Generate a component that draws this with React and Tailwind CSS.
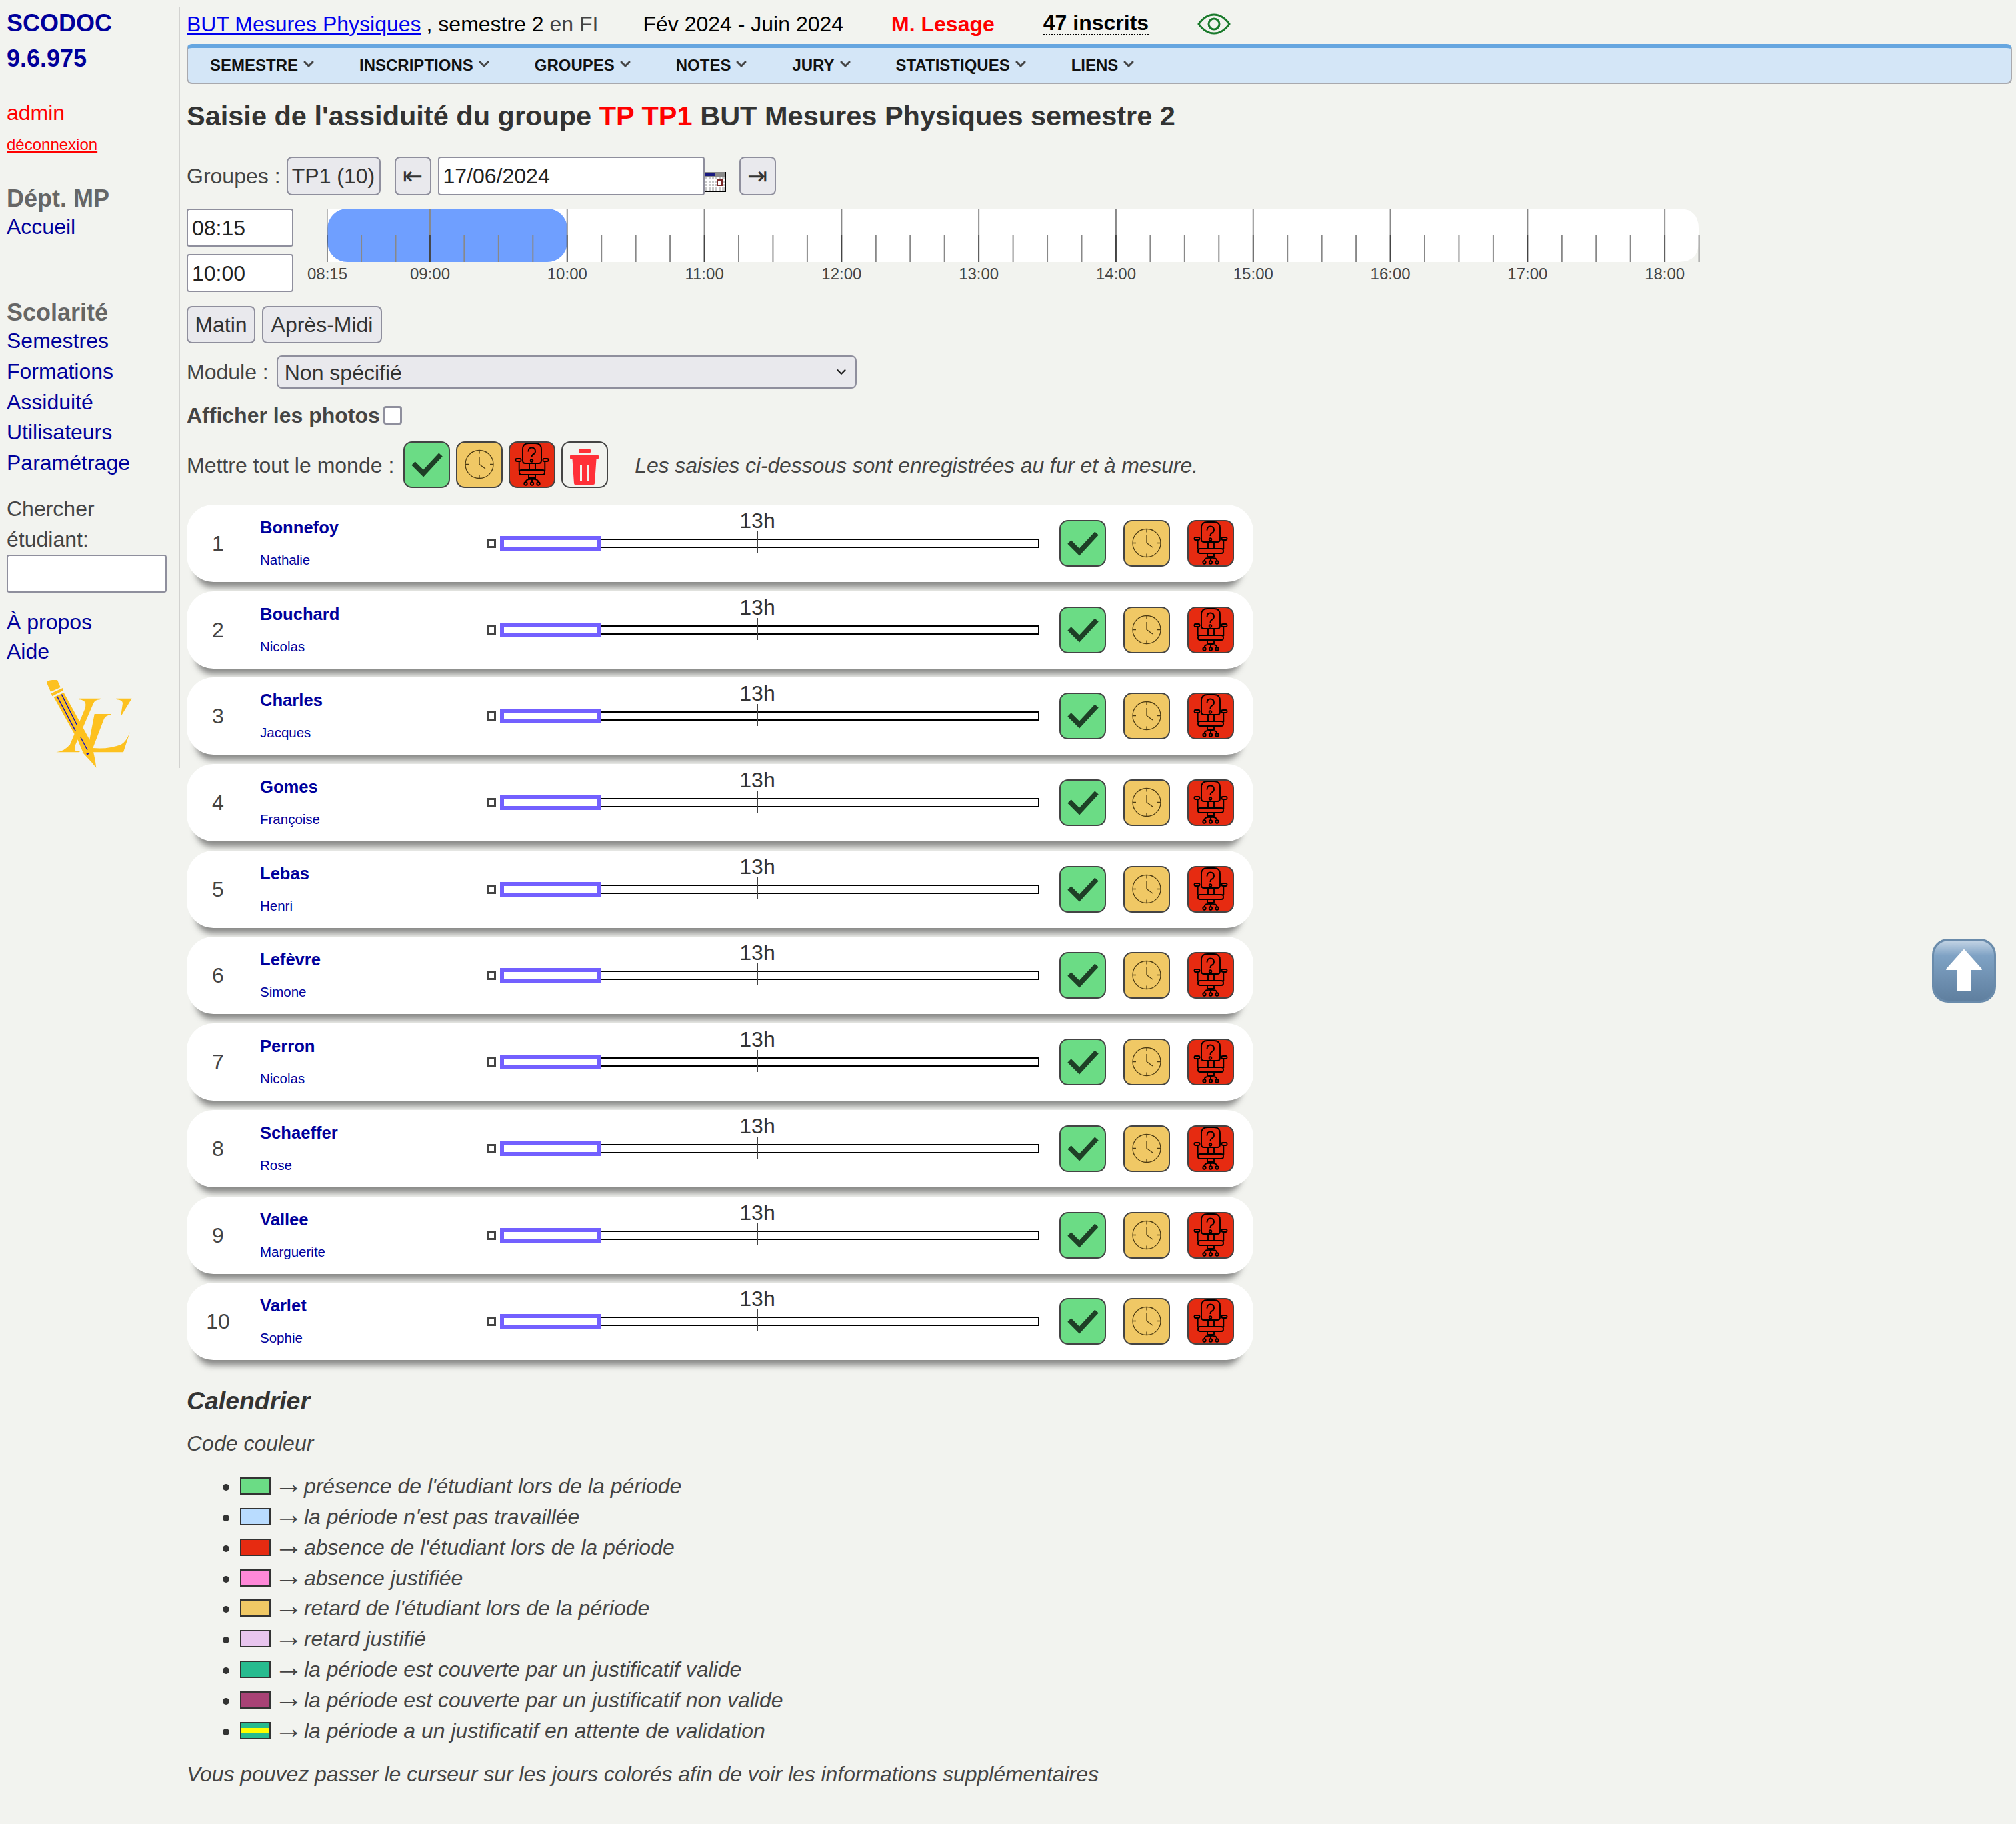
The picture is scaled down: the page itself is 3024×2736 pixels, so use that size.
import React from 'react'
import { ChevronDown } from 'lucide-react'

const students = [
  ['Bonnefoy', 'Nathalie'],
  ['Bouchard', 'Nicolas'],
  ['Charles', 'Jacques'],
  ['Gomes', 'Françoise'],
  ['Lebas', 'Henri'],
  ['Lefèvre', 'Simone'],
  ['Perron', 'Nicolas'],
  ['Schaeffer', 'Rose'],
  ['Vallee', 'Marguerite'],
  ['Varlet', 'Sophie'],
]

const menu = ['Semestre', 'Inscriptions', 'Groupes', 'Notes', 'Jury', 'Statistiques', 'Liens']
const scolarite = ['Semestres', 'Formations', 'Assiduité', 'Utilisateurs', 'Paramétrage']
const hours = ['09:00', '10:00', '11:00', '12:00', '13:00', '14:00', '15:00', '16:00', '17:00', '18:00']

const legend = [
  ['bg-[#6bdc85]', "présence de l'étudiant lors de la période"],
  ['bg-[#b9dcff]', "la période n'est pas travaillée"],
  ['bg-[#e62b11]', "absence de l'étudiant lors de la période"],
  ['bg-[#ff88d8]', 'absence justifiée'],
  ['bg-[#f0c865]', "retard de l'étudiant lors de la période"],
  ['bg-[#e8c5ee]', 'retard justifié'],
  ['bg-[#27bb8f]', 'la période est couverte par un justificatif valide'],
  ['bg-[#a84275]', 'la période est couverte par un justificatif non valide'],
  ['bg-[linear-gradient(#27bb8f_33%,#ffff00_33%,#ffff00_66%,#27bb8f_66%)]', 'la période a un justificatif en attente de validation'],
]

const CheckIcon = () => (
  <svg viewBox="2 2 66 66" className="h-[66px] w-[66px]">
    <path d="M15 33 L30 48 L56 20" fill="none" stroke="#1e3f26" strokeWidth="7.5" />
  </svg>
)

const ClockIcon = () => (
  <svg viewBox="2 2 66 66" className="h-[66px] w-[66px]" fill="none" stroke="#4d3c14" strokeWidth="1.3">
    <circle cx="35" cy="34.5" r="21" />
    <path d="M35 13.5v5M35 50.5v5M14 34.5h5M51 34.5h5M35 23v11.5L44 41" />
  </svg>
)

const ChairIcon = () => (
  <svg viewBox="2 2 66 66" className="h-[66px] w-[66px]" fill="none" stroke="#000" strokeWidth="1.9">
    <path d="M21 12 Q21 3 30 3 H40 Q49 3 49 12 V29 Q49 33 45 33 H25 Q21 33 21 29Z" />
    <path d="M29.5 15.5 Q29.5 9.5 34.5 9.5 Q40 9.5 40 15 Q40 18 36 20 Q34.5 21 34.5 24" strokeWidth="2" />
    <circle cx="34.5" cy="29" r="1.8" />
    <rect x="10.5" y="26" width="8" height="4" rx="1.5" />
    <rect x="51.5" y="26" width="8" height="4" rx="1.5" />
    <path d="M15.7 30 V44 M54.3 30 V44 M31 33 V43 M40 33 V43" />
    <rect x="16" y="43" width="38" height="7" rx="3" />
    <path d="M30 50 V55 H40 V50 M35 55 V61 M35 57 Q26 56 25.5 61 M35 57 Q44 56 44.5 61" />
    <circle cx="25.5" cy="63.5" r="2.2" />
    <circle cx="35" cy="63.5" r="2.2" />
    <circle cx="44.5" cy="63.5" r="2.2" />
  </svg>
)

const TrashIcon = () => (
  <svg viewBox="2 2 66 66" className="h-[66px] w-[66px]" fill="#ff3038">
    <rect x="26" y="12" width="18" height="5" rx="1" />
    <rect x="13" y="20" width="43" height="7" rx="2" />
    <path fillRule="evenodd" d="M16.5 27 H52.5 L50 63 Q50 65 48 65 H21 Q19 65 19 63Z M28 35 V59 H31 V35Z M39 35 V59 H42 V35Z" />
  </svg>
)

const EtatButton = ({ color, children }) => (
  <button className={`flex h-[70px] w-[70px] items-center justify-center overflow-hidden rounded-[13px] border-2 border-[#444] ${color}`}>
    {children}
  </button>
)

const Logo = () => (
  <svg viewBox="0 0 510 510" className="ml-[40px] mt-[1px] h-[170px] w-[170px]" fill="#fdc11f">
    <path d="M60 72 Q62 62 85 60 L108 60 L122 93 L78 113 Z" />
    <path d="M80 120 L132 96 L135 107 L85 133 Z" />
    <path d="M205 143 H303 L300 148 Q275 148 268 170 L190 350 Q185 372 190 378 L215 378 L205 385 H103 Q140 380 165 350 L232 190 Q245 150 205 148Z" />
    <path d="M275 213 H350 L347 218 Q325 218 318 235 L268 366 Q340 372 395 350 Q420 335 435 293 L405 385 H220 L245 370 Z" />
    <path d="M372 143 H443 L393 225 L402 165 Q402 150 375 148Z" />
    <path d="M92 137 L137 117 L262 345 L278 420 L283 455 L262 430 L225 390 L200 330 Z" />
    <path d="M107 134 L190 290 M127 125 L197 264 M213 318 L243 375" stroke="#0a0ac8" strokeWidth="4" />
    <path d="M238 388 L252 390 L241 400Z" fill="#0a0ac8" />
  </svg>
)

const Sidebar = () => (
  <aside className="mt-[10px] h-[1142px] w-[270px] shrink-0 border-r-2 border-[#d2d2d0] pl-[10px] text-[#00009b]">
    <div className="pt-[1px] text-[36px] font-bold leading-[48px]">SCODOC</div>
    <div className="mt-[5px] text-[36px] font-bold leading-[48px]">9.6.975</div>
    <div className="mt-[34px] leading-[46px] text-[#ff0000]">admin</div>
    <a className="mt-[8px] block text-[24px] leading-[34px] text-[#ff0000] underline">déconnexion</a>
    <div className="mt-[43px] text-[36px] font-bold leading-[42px] text-[#666]">Dépt. MP</div>
    <a className="block leading-[42px]">Accueil</a>
    <div className="mt-[88px] text-[36px] font-bold leading-[40px] text-[#666]">Scolarité</div>
    {scolarite.map(item => (
      <a key={item} className="block leading-[45.8px]">{item}</a>
    ))}
    <div className="mt-[22px] leading-[46px] text-[#444]">Chercher</div>
    <div className="leading-[46px] text-[#444]">étudiant:</div>
    <input className="block h-[57px] w-[240px] rounded-[4px] border-2 border-[#8f8f9d] bg-white" />
    <a className="mt-[22px] block leading-[44px]">À propos</a>
    <a className="block leading-[44px]">Aide</a>
    <Logo />
  </aside>
)

const TopBar = () => (
  <div className="flex h-[66px] items-center pt-[5px] text-black">
    <a className="text-[#0000ee] underline">BUT Mesures Physiques</a>
    <span className="ml-[8px]">, semestre 2 <span className="text-[#444]">en FI</span></span>
    <span className="ml-[67px]">Fév 2024 - Juin 2024</span>
    <span className="ml-[72px] font-bold text-[#ff0000]">M. Lesage</span>
    <span className="ml-[73px] border-b-2 border-dotted border-black font-bold leading-[33px]">47 inscrits</span>
    <svg viewBox="0 0 50 32" className="ml-[73px] h-[32px] w-[50px]" fill="none" stroke="#1a7a2c" strokeWidth="3">
      <path d="M2 16 Q12 2 25 2 Q38 2 48 16 Q38 30 25 30 Q12 30 2 16Z" />
      <circle cx="25" cy="16" r="8" />
    </svg>
  </div>
)

const MenuBar = () => (
  <nav className="flex h-[60px] w-[2738px] items-center gap-[64px] rounded-[8px] border-2 border-t-[6px] border-[#a9a9ae] border-t-[#66a6e0] bg-[#d4e6f7] pl-[33px] text-[24px] font-bold uppercase text-[#111]">
    {menu.map(item => (
      <span key={item} className="flex items-center gap-[4px]">
        {item}
        <ChevronDown size={24} strokeWidth={3} className="-mt-[4px] text-[#444]" />
      </span>
    ))}
  </nav>
)

const Timeline = () => {
  const ticks = Array.from({ length: 41 }, (_, i) => 0.6 + i * 51.45)
  return (
    <div className="relative ml-[50px] h-[125px] w-[2060px]">
      <svg viewBox="0 0 2060 80" className="h-[80px] w-[2060px]">
        <path d="M0 0 H2028 Q2058 0 2058 30 V50 Q2058 80 2028 80 H0Z" fill="#fff" />
        <rect x="1" y="0" width="360" height="80" rx="30" fill="#6f9fff" />
        {ticks.map((x, i) => {
          const major = i % 4 === 3 || i === 0
          return (
            <g key={i} strokeWidth="2">
              {major && <line x1={x} x2={x} y1="0" y2="40" stroke="#888" />}
              <line x1={x} x2={x} y1="40" y2="80" stroke={major ? '#444' : '#888'} />
            </g>
          )
        })}
      </svg>
      <span className="absolute left-[1px] top-[84px] -translate-x-1/2 text-[24px] leading-[28px] text-[#444]">08:15</span>
      {hours.map((h, i) => (
        <span
          key={h}
          className="absolute top-[84px] -translate-x-1/2 text-[24px] leading-[28px] text-[#444]"
          style={{ left: 155 + i * 205.8 }}
        >
          {h}
        </span>
      ))}
    </div>
  )
}

const MiniTimeline = () => (
  <div className="relative h-full w-[859px] shrink-0">
    <div className="absolute left-0 top-[51px] h-[14px] w-[14px] border-[3px] border-[#444] bg-white" />
    <div className="absolute left-[20px] top-[51px] h-[14px] w-[809px] border-2 border-black bg-white" />
    <div className="absolute left-[20px] top-[47px] h-[22px] w-[152px] border-[6px] border-[#7360ff] bg-white" />
    <div className="absolute left-[405px] top-[40px] h-[33px] w-[2px] bg-[#444]" />
    <span className="absolute left-[406px] top-[5px] -translate-x-1/2 leading-[38px] text-[#333]">13h</span>
  </div>
)

const StudentCard = ({ index, last, first }) => (
  <div className="flex h-[116px] w-[1600px] items-center rounded-[40px] bg-white shadow-[-2px_24px_10px_-16px_rgba(68,68,68,0.61)]">
    <div className="w-[94px] shrink-0 text-center text-[#444]">{index}</div>
    <div className="h-full w-[356px] shrink-0 pl-[16px] text-[#00009b]">
      <div className="pt-[18px] text-[25.6px] font-bold leading-[32px]">{last}</div>
      <div className="mt-[20px] text-[20.5px] leading-[26px]">{first}</div>
    </div>
    <MiniTimeline />
    <div className="flex gap-[26px] pl-0">
      <EtatButton color="bg-[#6bdc85]"><CheckIcon /></EtatButton>
      <EtatButton color="bg-[#f0c865]"><ClockIcon /></EtatButton>
      <EtatButton color="bg-[#e62b11]"><ChairIcon /></EtatButton>
    </div>
  </div>
)

const Legend = () => (
  <div className="text-[#444] italic">
    <h3 className="mt-[38px] text-[37.4px] font-bold leading-[46px] text-[#333]">Calendrier</h3>
    <p className="mt-[18px] leading-[46px]">Code couleur</p>
    <ul className="mt-[19px] list-disc pl-[80px] marker:text-[#333]">
      {legend.map(([color, label]) => (
        <li key={label} className="leading-[45.8px]">
          <span className={`mr-[5px] inline-block h-[26px] w-[46px] border-2 border-[#333] align-[-2px] ${color}`} />
          <span className="inline-block w-[36px] text-[44px] leading-[0] not-italic">→</span> {label}
        </li>
      ))}
    </ul>
    <p className="mt-[19px] leading-[46px] tracking-[-0.06px]">Vous pouvez passer le curseur sur les jours colorés afin de voir les informations supplémentaires</p>
  </div>
)

const btn = 'rounded-[8px] border-2 border-[#8f8f9d] bg-[#e9e9ed] text-[#333]'

const App = () => (
  <div className="relative flex min-h-[2736px] bg-[#f2f3ef] font-['Liberation_Sans',Arial,sans-serif] text-[32px] text-[#444]">
    <Sidebar />
    <main className="pl-[10px]">
      <TopBar />
      <MenuBar />
      <h2 className="mt-[22px] text-[41.5px] font-bold leading-[52px] text-[#333]">
        Saisie de l'assiduité du groupe <span className="text-[#ff0000]">TP TP1</span> BUT Mesures Physiques semestre 2
      </h2>

      <div className="mt-[35px] flex h-[58px] items-center">
        <span>Groupes :</span>
        <button className={`ml-[9px] h-[58px] w-[141px] ${btn}`}>TP1 (10)</button>
        <button className={`ml-[21px] h-[58px] w-[55px] ${btn} text-[36px] leading-none`}>⇤</button>
        <input defaultValue="17/06/2024" className="ml-[10px] h-[58px] w-[400px] rounded-[4px] border-2 border-[#8f8f9d] bg-white px-[6px] pt-[1px] text-[#222]" />
        <svg viewBox="0 0 32 30" className="mt-[18px] h-[30px] w-[32px]">
          <rect width="32" height="30" fill="#8a8a8a" />
          <rect x="1" y="2" width="15" height="4" fill="#1a1a80" />
          <rect x="0" y="7" width="30" height="21" fill="#c8c8c8" />
          <path d="M0 12h30M0 17h30M0 22h30M5 7v21M10 7v21M15 7v21M20 7v21M25 7v21" stroke="#fff" strokeWidth="2" />
          <rect x="19" y="12" width="7" height="8" fill="#fff" stroke="#7a2a2a" strokeWidth="2" />
          <path d="M31 0v30M0 29h32" stroke="#000" strokeWidth="2" />
        </svg>
        <button className={`ml-[20px] h-[58px] w-[55px] ${btn} text-[36px] leading-none`}>⇥</button>
      </div>

      <div className="mt-[20px] flex">
        <div className="flex w-[160px] flex-col gap-[11px]">
          <input defaultValue="08:15" className="h-[57px] w-[160px] rounded-[4px] border-2 border-[#8f8f9d] bg-white px-[6px] pt-[1px] text-[#222]" />
          <input defaultValue="10:00" className="h-[57px] w-[160px] rounded-[4px] border-2 border-[#8f8f9d] bg-white px-[6px] pt-[1px] text-[#222]" />
        </div>
        <Timeline />
      </div>

      <div className="mt-[21px] flex gap-[10px]">
        <button className={`h-[56px] w-[103px] ${btn}`}>Matin</button>
        <button className={`h-[56px] w-[180px] ${btn}`}>Après-Midi</button>
      </div>

      <div className="mt-[18px] flex h-[50px] items-center gap-[12px]">
        <span>Module :</span>
        <div className="relative">
          <select className={`h-[50px] w-[870px] appearance-none px-[10px] ${btn}`}>
            <option>Non spécifié</option>
          </select>
          <ChevronDown size={22} strokeWidth={2.5} className="absolute right-[12px] top-[14px] text-[#222]" />
        </div>
      </div>

      <div className="mt-[20px] flex h-[40px] items-center gap-[5px] font-bold">
        <span>Afficher les photos</span>
        <span className="h-[28px] w-[28px] rounded-[4px] border-[3px] border-[#8f8f9d] bg-white" />
      </div>

      <div className="mt-[19px] flex h-[70px] items-center">
        <span className="pt-[2px]">Mettre tout le monde :</span>
        <div className="ml-[14px] flex gap-[9px]">
          <EtatButton color="bg-[#6bdc85]"><CheckIcon /></EtatButton>
          <EtatButton color="bg-[#f0c865]"><ClockIcon /></EtatButton>
          <EtatButton color="bg-[#e62b11]"><ChairIcon /></EtatButton>
          <EtatButton color="bg-[#f2f3ef]"><TrashIcon /></EtatButton>
        </div>
        <em className="ml-[40px] pt-[2px] tracking-[-0.12px]">Les saisies ci-dessous sont enregistrées au fur et à mesure.</em>
      </div>

      <div className="mt-[25px] flex flex-col gap-[13.7px]">
        {students.map(([last, first], i) => (
          <StudentCard key={last} index={i + 1} last={last} first={first} />
        ))}
      </div>

      <Legend />
    </main>

    <svg viewBox="0 0 96 96" className="absolute left-[2898px] top-[1408px] h-[96px] w-[96px]">
      <defs>
        <linearGradient id="emojiBg" x1="0" y1="0" x2="0" y2="1">
          <stop offset="0" stopColor="#c3d4e5" />
          <stop offset="0.25" stopColor="#7fa2c4" />
          <stop offset="1" stopColor="#5f7f9f" />
        </linearGradient>
      </defs>
      <rect width="96" height="96" rx="24" fill="#6a8bab" />
      <rect x="3" y="3" width="90" height="90" rx="22" fill="url(#emojiBg)" />
      <path d="M48 17 L74 46 H58 V78 H38 V46 H22Z" fill="#fff" stroke="#fff" strokeWidth="2" strokeLinejoin="round" />
    </svg>
  </div>
)

export default App
